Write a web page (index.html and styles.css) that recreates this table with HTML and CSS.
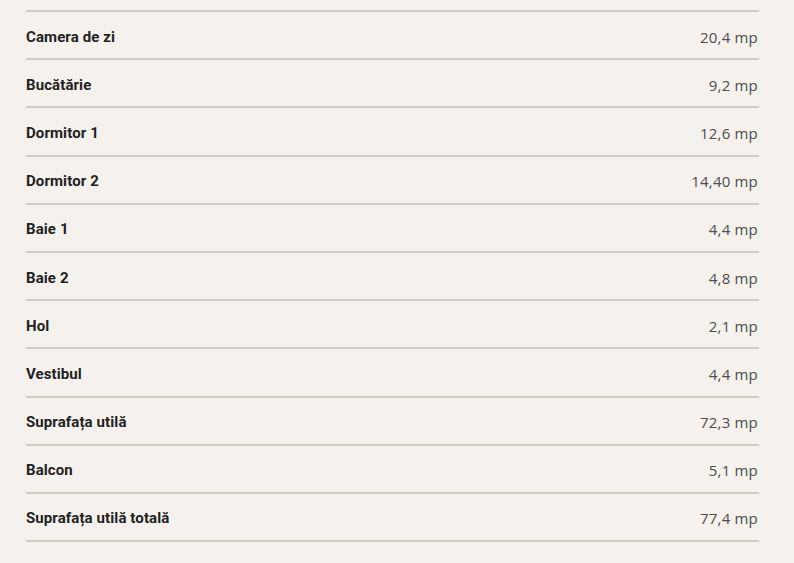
FILE: index.html
```html
<!DOCTYPE html>
<html lang="ro">
<head>
<meta charset="utf-8">
<link rel="stylesheet" href="styles.css">
</head>
<body>
<div class="page">
  <div class="table">
    <div class="row"><span class="label">Camera de zi</span><span class="value">20,4 mp</span></div>
    <div class="row"><span class="label">Bucătărie</span><span class="value">9,2 mp</span></div>
    <div class="row"><span class="label">Dormitor 1</span><span class="value">12,6 mp</span></div>
    <div class="row"><span class="label">Dormitor 2</span><span class="value">14,40 mp</span></div>
    <div class="row"><span class="label">Baie 1</span><span class="value">4,4 mp</span></div>
    <div class="row"><span class="label">Baie 2</span><span class="value">4,8 mp</span></div>
    <div class="row"><span class="label">Hol</span><span class="value">2,1 mp</span></div>
    <div class="row"><span class="label">Vestibul</span><span class="value">4,4 mp</span></div>
    <div class="row"><span class="label">Suprafața utilă</span><span class="value">72,3 mp</span></div>
    <div class="row"><span class="label">Balcon</span><span class="value">5,1 mp</span></div>
    <div class="row"><span class="label">Suprafața utilă totală</span><span class="value">77,4 mp</span></div>
  </div>
</div>
</body>
</html>
```
FILE: styles.css
```css
html, body {
  margin: 0;
  padding: 0;
  background: #f5f1ec;
}
.page {
  padding: 10px 35px 0 26px;
}
.table {
  border-top: 2px solid #d3ccc3;
}
.row {
  display: flex;
  justify-content: space-between;
  align-items: center;
  height: 46.2px;
  padding-top: 3px;
  box-sizing: border-box;
  height: 48.2px;
  border-bottom: 2px solid #d3ccc3;
}
.label {
  font-family: Roboto, "Liberation Sans", sans-serif;
  font-weight: 700;
  font-size: 15px;
  letter-spacing: 0.1px;
  color: #222;
}
.value {
  font-family: "Open Sans", "Liberation Sans", sans-serif;
  font-size: 15px;
  color: #4d4d4d;
  letter-spacing: 0.2px;
  padding-right: 1px;
}
```
